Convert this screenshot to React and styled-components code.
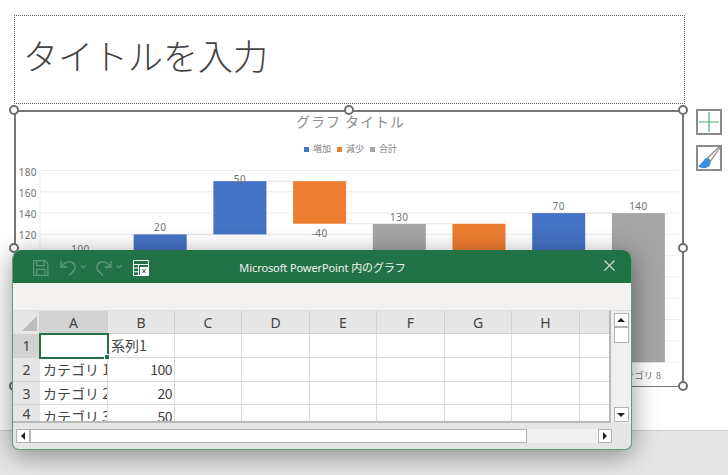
import React from "react"
import styled, { createGlobalStyle } from "styled-components"

const JP = `"Noto Sans CJK JP", "Noto Sans", sans-serif`

const GlobalStyle = createGlobalStyle`
  html, body {
    margin: 0;
    padding: 0;
    background: #fff;
    overflow: hidden;
    font-family: ${JP};
  }
`

const Page = styled.div`
  position: relative;
  width: 728px;
  height: 475px;
  overflow: hidden;
  display: flex;
  flex-direction: column;
`
const Slide = styled.div`
  height: 430px;
  box-sizing: border-box;
  padding: 15px 5px 0 14px;
  background: #fff;
  display: flex;
  gap: 11px;
`
const Footer = styled.div`
  flex: 1;
  background: #e6e6e6;
  border-top: 1px solid #cfcfcf;
`
const Main = styled.div`
  width: 671px;
  display: flex;
  flex-direction: column;
  gap: 6px;
`
const TitleBox = styled.div`
  height: 89px;
  box-sizing: border-box;
  border: 1px dotted #666;
  padding: 10px 0 0 8px;
  font-size: 35px;
  font-weight: 300;
  line-height: 58px;
  color: #444;
`
const ChartFrame = styled.div`
  position: relative;
  width: 670px;
  height: 277px;
  box-sizing: border-box;
  border: 2px solid #777;
  border-bottom-width: 1px;
  display: flex;
  flex-direction: column;
  align-items: center;
`
const ChartTitle = styled.div`
  margin-top: -1px;
  margin-left: 3px;
  height: 20px;
  line-height: 20px;
  font-size: 14px;
  letter-spacing: 1px;
  color: #8c8c8c;
`
const Legend = styled.div`
  margin-top: 11px;
  margin-left: 3px;
  height: 14px;
  display: flex;
  gap: 6px;
  font-size: 9px;
  line-height: 14px;
  color: #808080;
`
const LegendItem = styled.div`
  display: flex;
  align-items: center;
  gap: 4px;
`
const Swatch = styled.span`
  width: 5px;
  height: 5px;
  background: ${(p) => p.$color};
`
const Plot = styled.svg`
  display: block;
  flex: none;
  margin-top: 4px;
  align-self: flex-start;
  width: 666px;
  height: 226px;
`
const Handle = styled.span`
  position: absolute;
  width: 10px;
  height: 10px;
  box-sizing: border-box;
  border: 2px solid #6e6e6e;
  border-radius: 50%;
  background: #fff;
  left: ${(p) => p.$x}px;
  top: ${(p) => p.$y}px;
`
const SideTools = styled.div`
  display: flex;
  flex-direction: column;
  gap: 10px;
  padding-top: 94px;
`
const ToolButton = styled.button`
  width: 26px;
  height: 26px;
  padding: 0;
  background: #fff;
  border: 2px solid #8c8c8c;
  display: flex;
  align-items: center;
  justify-content: center;
  overflow: visible;
`

const ExcelWindow = styled.div`
  position: absolute;
  left: 12px;
  top: 250px;
  width: 620px;
  height: 200px;
  box-sizing: border-box;
  background: #e6e6e6;
  border: 1px solid #5f9c78;
  border-top: none;
  border-radius: 9px 9px 7px 7px;
  box-shadow: 0 5px 26px rgba(0, 0, 0, 0.42);
  display: flex;
  flex-direction: column;
  overflow: hidden;
`
const TitleBar = styled.div`
  position: relative;
  height: 33px;
  flex: none;
  background: #217346;
  display: flex;
  align-items: center;
  justify-content: center;
  color: #f2f2f2;
  font-family: "Noto Sans", "Noto Sans CJK JP", sans-serif;
  font-size: 11px;
  letter-spacing: -0.1px;
  padding-left: 1px;
`
const QuickAccess = styled.div`
  position: absolute;
  left: 20px;
  top: 10px;
  display: flex;
  align-items: center;
  height: 16px;
`
const CloseButton = styled.div`
  position: absolute;
  right: 16px;
  top: 10px;
  width: 11px;
  height: 11px;
  display: flex;
`
const Ribbon = styled.div`
  height: 27px;
  flex: none;
  background: #f3f2f1;
  border-bottom: 1px solid #dcdcdc;
`
const SheetRow = styled.div`
  display: flex;
  height: 112px;
  flex: none;
`
const Sheet = styled.div`
  width: 598px;
  height: 112px;
  flex: none;
  display: grid;
  grid-template-columns: 27px 68px 67px 67px 68px 67px 68px 67px 68px 1fr;
  grid-template-rows: 23px 24px 24px 23px 18px;
  overflow: hidden;
  background: #fff;
  position: relative;
  &::after {
    content: "";
    position: absolute;
    inset: 0;
    pointer-events: none;
    box-shadow: inset -2px -2px 0 #b9b9b9;
  }
`
const Corner = styled.div`
  background: #e6e6e6;
  border-right: 1px solid #d0d0d0;
  position: relative;
  &::after {
    content: "";
    position: absolute;
    right: 2px;
    bottom: 3px;
    border-style: solid;
    border-width: 0 0 15px 15px;
    border-color: transparent transparent #bcbcbc transparent;
  }
`
const ColHead = styled.div`
  background: ${(p) => (p.$active ? "#d2d2d2" : "#e6e6e6")};
  border-right: 1px solid #cfcfcf;
  border-bottom: 1px solid #cfcfcf;
  display: flex;
  align-items: center;
  justify-content: center;
  font-family: "Noto Sans", sans-serif;
  font-size: 14px;
  color: #444;
`
const RowHead = styled.div`
  background: ${(p) => (p.$active ? "#d2d2d2" : "#e6e6e6")};
  border-bottom: 1px solid #d0d0d0;
  display: flex;
  align-items: center;
  justify-content: center;
  font-family: "Noto Sans", sans-serif;
  font-size: 14px;
  color: #444;
`
const Cell = styled.div`
  position: relative;
  min-width: 0;
  box-sizing: border-box;
  border-right: 1px solid #d9d9d9;
  border-bottom: 1px solid #d9d9d9;
  padding: 0 2px 0 3px;
  font-size: 14px;
  line-height: 22px;
  color: #444;
  white-space: nowrap;
  overflow: ${(p) => (p.$selected ? "visible" : "hidden")};
  text-align: ${(p) => (p.$num ? "right" : "left")};
  ${(p) => p.$num && "letter-spacing: -0.5px;"}
  ${(p) => p.$selected && "outline: 2px solid #217346; outline-offset: -1px; z-index: 1;"}
`
const FillHandle = styled.span`
  position: absolute;
  right: -3px;
  bottom: -3px;
  width: 6px;
  height: 6px;
  background: #217346;
  border: 1px solid #fff;
  box-sizing: border-box;
`
const VScroll = styled.div`
  flex: 1;
  display: flex;
  flex-direction: column;
  align-items: center;
  padding: 2px 0 1px;
  box-sizing: border-box;
  background: #f0f0f0;
`
const ScrollButton = styled.div`
  width: ${(p) => p.$w || 14}px;
  height: ${(p) => p.$h || 14}px;
  flex: none;
  box-sizing: border-box;
  background: #fff;
  border: 1px solid #b4b4b4;
  display: flex;
  align-items: center;
  justify-content: center;
`
const Spacer = styled.div`
  flex: 1;
`
const HScroll = styled.div`
  margin-top: 6px;
  margin-left: 3px;
  width: 596px;
  height: 14px;
  display: flex;
  background: #f0f0f0;
`
const HThumb = styled.div`
  width: 497px;
  box-sizing: border-box;
  background: #fff;
  border: 1px solid #b4b4b4;
`
const Arrow = styled.span`
  width: 0;
  height: 0;
  border-style: solid;
  border-color: transparent;
  ${(p) => p.$dir === "up" && "border-width: 0 4px 4px 4px; border-bottom-color: #222;"}
  ${(p) => p.$dir === "down" && "border-width: 4px 4px 0 4px; border-top-color: #222;"}
  ${(p) => p.$dir === "left" && "border-width: 4px 4px 4px 0; border-right-color: #222;"}
  ${(p) => p.$dir === "right" && "border-width: 4px 0 4px 4px; border-left-color: #222;"}
`

const BLUE = "#4472c4"
const ORANGE = "#ed7d31"
const GRAY = "#a5a5a5"

// plot svg starts at page y 160: 180 sits at 170.5, 20 units are 21.3px
const yOf = (v) => 170.5 + ((180 - v) * 21.3) / 20 - 160
const bars = [
  { from: 0, to: 100, color: BLUE, label: "100" },
  { from: 100, to: 120, color: BLUE, label: "20" },
  { from: 120, to: 170, color: BLUE, label: "50", lift: -1.5 },
  { from: 170, to: 130, color: ORANGE, label: "-40" },
  { from: 0, to: 130, color: GRAY, label: "130" },
  { from: 130, to: 70, color: ORANGE, label: "" },
  { from: 70, to: 140, color: BLUE, label: "70" },
  { from: 0, to: 140, color: GRAY, label: "140" },
]
const ticks = [180, 160, 140, 120, 100, 80, 60, 40, 20, 0]

const WaterfallPlot = () => (
  <Plot viewBox="0 0 666 226" fontFamily={JP} fontSize="9" fill="#707070">
    {ticks.map((t) => (
      <g key={t}>
        <line x1="24" x2="663" y1={yOf(t)} y2={yOf(t)} stroke="#ececec" strokeWidth="1" />
        <text
          x="21"
          y={yOf(t) + 5}
          textAnchor="end"
          fontFamily="Noto Sans, sans-serif"
          fontSize="10"
          letterSpacing="0.4"
        >
          {t}
        </text>
      </g>
    ))}
    <line x1="24" x2="24" y1={yOf(180)} y2={yOf(0)} stroke="#ececec" />
    {bars.map((b, i) => {
      const x = 38 + i * 79.7
      const top = Math.max(b.from, b.to)
      const bottom = Math.min(b.from, b.to)
      const below = b.to < b.from
      return (
        <g key={i}>
          {i < 7 && (
            <line x1={x + 53} x2={x + 80} y1={yOf(b.to)} y2={yOf(b.to)} stroke="#e2e2e2" />
          )}
          <rect x={x} y={yOf(top)} width="53" height={yOf(bottom) - yOf(top)} fill={b.color} />
          <text
            x={x + 26.5}
            y={below ? yOf(bottom) + 13.5 : yOf(top) - 3 - (b.lift || 0) * 3}
            textAnchor="middle"
            fontFamily="Noto Sans, sans-serif"
            fontSize="10"
            letterSpacing="0.4"
          >
            {b.label}
          </text>
          <text x={x + 26.5} y={yOf(0) + 17} textAnchor="middle" letterSpacing="0.5">
            カテゴリ {i + 1}
          </text>
        </g>
      )
    })}
  </Plot>
)

const dim = "#5c9a78"
const QuickIcons = () => (
  <svg width="118" height="16" viewBox="0 0 118 16" fill="none">
    <g stroke={dim} strokeWidth="1.2">
      <path d="M0.6 0.6h11.5l2.8 2.8v12H0.6z" />
      <path d="M3.6 0.6v5h7.6v-5M3.6 15.4v-6h8.4v6" />
      <path d="M28 1v6h6M28 7C31 3 35 1.500 38 2c4 1 5 5 3.500 8L36 15.500" strokeWidth="1.4" />
      <path d="M48 5.500l2.500 2.200 2.500-2.200" />
      <path d="M78 1v6h-6M78 7C75 3 71 1.500 68 2c-4 1-5 5-3.500 8L70 15.500" strokeWidth="1.4" />
      <path d="M83.500 5.500l2.500 2.200 2.500-2.200" />
    </g>
    <g stroke="#fff" strokeWidth="1" transform="translate(100 0)">
      <path d="M0.5 0.5h15v15h-15z" />
      <path d="M0.5 4.500h15M0.5 8h5M0.5 11.800h5M5.500 4.500v11" />
      <rect x="7" y="7" width="8.500" height="8.500" fill="#fff" stroke="none" />
      <path d="M9.500 9l3 4M12.500 9l-3 4" stroke="#217346" />
    </g>
  </svg>
)

const columns = ["A", "B", "C", "D", "E", "F", "G", "H", ""]
const rows = [
  ["", "系列1"],
  ["カテゴリ 1", 100],
  ["カテゴリ 2", 20],
  ["カテゴリ 3", 50],
  ["カテゴリ 4", -40],
]

const handlePoints = [
  [-7, -7],
  [328, -7],
  [662, -7],
  [-7, 131],
  [662, 131],
  [-7, 269],
  [662, 269],
]

const App = () => (
  <Page>
    <GlobalStyle />
    <Slide>
      <Main>
        <TitleBox>タイトルを入力</TitleBox>
        <ChartFrame>
          <ChartTitle>グラフ タイトル</ChartTitle>
          <Legend>
            <LegendItem>
              <Swatch $color={BLUE} />
              増加
            </LegendItem>
            <LegendItem>
              <Swatch $color={ORANGE} />
              減少
            </LegendItem>
            <LegendItem>
              <Swatch $color={GRAY} />
              合計
            </LegendItem>
          </Legend>
          <WaterfallPlot />
          {handlePoints.map(([x, y]) => (
            <Handle key={`${x}-${y}`} $x={x} $y={y} />
          ))}
        </ChartFrame>
      </Main>
      <SideTools>
        <ToolButton>
          <svg width="20" height="20" viewBox="0 0 20 20">
            <path d="M10 0v20M0 10h20" stroke="#4caf6d" strokeWidth="1.2" />
          </svg>
        </ToolButton>
        <ToolButton>
          <svg width="24" height="24" viewBox="0 0 24 24" style={{ flex: "none" }}>
            <path d="M21.500 1.500c.8-.5 1.500 0 1 1L13.500 15l-3-3z" fill="#fff" stroke="#8a8a8a" strokeWidth="1.2" />
            <path d="M9 12c-3 2-4 6-8 8 3 3 10 3 12-1 1-2 1-4-.5-5.500-1-1-2.300-1.700-3.500-1.500z" fill="#3c8ddc" />
          </svg>
        </ToolButton>
      </SideTools>
    </Slide>
    <Footer />
    <ExcelWindow>
      <TitleBar>
        <QuickAccess>
          <QuickIcons />
        </QuickAccess>
        Microsoft PowerPoint 内のグラフ
        <CloseButton>
          <svg width="11" height="11" viewBox="0 0 11 11">
            <path d="M0.5 0.5l10 10M10.500 0.500l-10 10" stroke="#cfe3d7" strokeWidth="1.1" />
          </svg>
        </CloseButton>
      </TitleBar>
      <Ribbon />
      <SheetRow>
        <Sheet>
          <Corner />
          {columns.map((c, i) => (
            <ColHead key={i} $active={c === "A"}>
              {c}
            </ColHead>
          ))}
          {rows.map((row, r) => (
            <React.Fragment key={r}>
              <RowHead $active={r === 0}>{r + 1}</RowHead>
              {columns.map((_, c) => (
                <Cell key={c} $selected={r === 0 && c === 0} $num={typeof row[c] === "number"}>
                  {row[c]}
                  {r === 0 && c === 0 && <FillHandle />}
                </Cell>
              ))}
            </React.Fragment>
          ))}
        </Sheet>
        <VScroll>
          <ScrollButton $w={15} $h={14}>
            <Arrow $dir="up" />
          </ScrollButton>
          <ScrollButton $w={15} $h={16} />
          <Spacer />
          <ScrollButton $w={15} $h={15}>
            <Arrow $dir="down" />
          </ScrollButton>
        </VScroll>
      </SheetRow>
      <HScroll>
        <ScrollButton>
          <Arrow $dir="left" />
        </ScrollButton>
        <HThumb />
        <Spacer />
        <ScrollButton>
          <Arrow $dir="right" />
        </ScrollButton>
      </HScroll>
    </ExcelWindow>
  </Page>
)

export default App
